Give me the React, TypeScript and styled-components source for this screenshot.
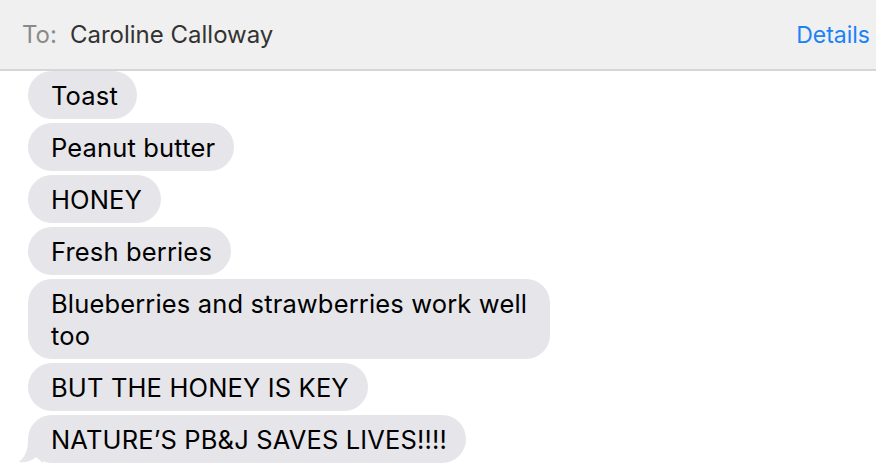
import styled, { createGlobalStyle } from "styled-components";

const GlobalStyle = createGlobalStyle`
  html, body {
    margin: 0;
    padding: 0;
    background: #ffffff;
  }
  body {
    font-family: Inter, "Liberation Sans", Arial, sans-serif;
    -webkit-font-smoothing: antialiased;
  }
`;

const Window = styled.div`
  width: 876px;
  height: 472px;
  overflow: hidden;
  background: #ffffff;
  display: flex;
  flex-direction: column;
`;

const Header = styled.header`
  height: 69px;
  flex-shrink: 0;
  background: #f0f0f0;
  border-bottom: 2px solid #d6d6d6;
  display: flex;
  align-items: center;
  padding: 0 6px 0 22px;
  font-size: 24px;
`;

const ToLabel = styled.span`
  color: #8a8a8a;
  margin-right: 13px;
`;

const Recipient = styled.span`
  color: #333333;
  flex: 1;
`;

const DetailsLink = styled.a`
  color: #1b82f8;
  font-size: 23px;
  cursor: pointer;
`;

const Thread = styled.div`
  display: flex;
  flex-direction: column;
  align-items: flex-start;
  gap: 4px;
  padding: 0 0 0 28px;
`;

const Bubble = styled.div`
  position: relative;
  box-sizing: border-box;
  max-width: 522px;
  background: #e5e5ea;
  color: #000000;
  font-size: 25.5px;
  letter-spacing: 0.15px;
  line-height: 32px;
  padding: 9px 19px 7px 23px;
  border-radius: 24px;
`;

const Tail = styled.svg`
  position: absolute;
  left: -9px;
  bottom: 0;
  width: 24px;
  height: 22px;
`;

const messages = [
  "Toast",
  "Peanut butter",
  "HONEY",
  "Fresh berries",
  "Blueberries and strawberries work well too",
  "BUT THE HONEY IS KEY",
  "NATURE\u2019S PB&J SAVES LIVES!!!!",
];

export default function App() {
  return (
    <>
      <GlobalStyle />
      <Window>
        <Header>
          <ToLabel>To:</ToLabel>
          <Recipient>Caroline Calloway</Recipient>
          <DetailsLink>Details</DetailsLink>
        </Header>
        <Thread>
          {messages.map((text, i) => (
            <Bubble key={i}>
              {i === messages.length - 1 && (
                <Tail viewBox="0 0 24 22">
                  <path
                    d="M9 0 C9 9 6 16 0 21 C6 22 13 20 17 16 L24 22 L24 0 Z"
                    fill="#e5e5ea"
                  />
                </Tail>
              )}
              {text}
            </Bubble>
          ))}
        </Thread>
      </Window>
    </>
  );
}
